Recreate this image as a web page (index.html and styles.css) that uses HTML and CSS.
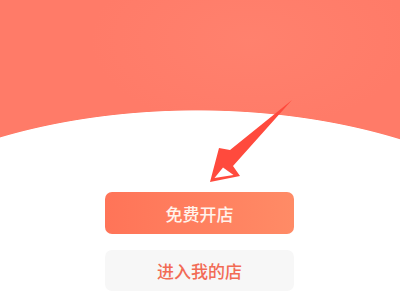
FILE: index.html
```html
<!DOCTYPE html>
<html lang="zh">
<head>
<meta charset="utf-8">
<link rel="stylesheet" href="styles.css">
</head>
<body>
<div class="page">
  <svg class="arrow" width="400" height="300" viewBox="0 0 400 300" xmlns="http://www.w3.org/2000/svg">
    <path d="M292,100 L230,150 L219,148 L210,182 L240,176 L233,166 Z" fill="#ff4a3d"/>
    <path d="M214.5,178 L223,167.5 L233.5,175 Z" fill="#ffffff"/>
  </svg>
  <div class="actions">
    <button class="btn btn-primary">免费开店</button>
    <button class="btn btn-secondary">进入我的店</button>
  </div>
</div>
</body>
</html>
```
FILE: styles.css
```css
html, body {
  margin: 0;
  padding: 0;
}
body {
  width: 400px;
  height: 300px;
  overflow: hidden;
  font-family: "Noto Sans CJK SC", "Noto Sans", sans-serif;
}
.page {
  position: relative;
  width: 400px;
  height: 300px;
  background:
    radial-gradient(ellipse 400px 208px at 197px 318px, #ffffff 99.6%, rgba(255,255,255,0) 100%),
    radial-gradient(ellipse 160px 90px at 250px 40px, rgba(255,140,120,0.35), rgba(255,140,120,0) 100%),
    #ff7b68;
}
.arrow {
  position: absolute;
  left: 0;
  top: 0;
}
.actions {
  display: flex;
  flex-direction: column;
  gap: 16px;
  padding: 192px 0 0 105px;
}
.btn {
  width: 189px;
  border: none;
  border-radius: 7px;
  font-family: inherit;
  font-size: 17px;
  font-weight: 500;
  padding: 0;
  display: flex;
  align-items: center;
  justify-content: center;
}
.btn-primary {
  height: 42px;
  background: linear-gradient(90deg, #ff7458, #ff8b66);
  color: #fff3ec;
}
.btn-secondary {
  height: 41px;
  background: #f7f7f7;
  color: #f26b55;
}
```
